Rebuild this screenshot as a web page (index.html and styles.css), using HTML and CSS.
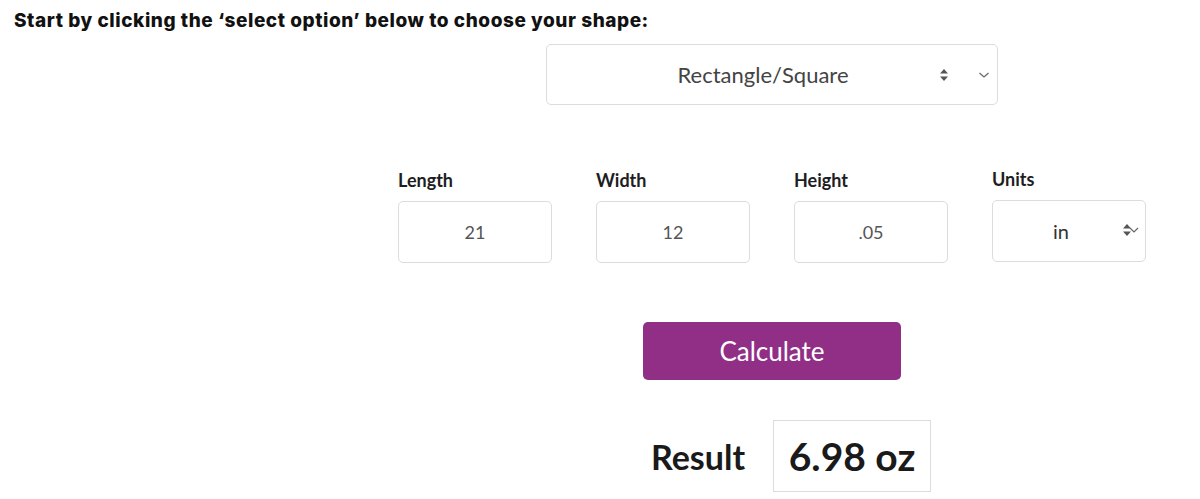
FILE: index.html
```html
<!DOCTYPE html>
<html lang="en">
<head>
<meta charset="utf-8">
<title>Shape calculator</title>
<link rel="stylesheet" href="styles.css">
</head>
<body>
<h1 class="intro">Start by clicking the ‘select option’ below to choose your shape:</h1>
<main class="calc">
  <div class="shape-select">
    <span class="shape-value">Rectangle/Square</span>
    <svg class="updown" width="10" height="14" viewBox="0 0 10 14"><path d="M5 1 L9 5.5 H1 Z M5 13 L9 8.5 H1 Z" fill="#555"/></svg>
    <svg class="chev" width="12" height="8" viewBox="0 0 12 8"><path d="M1.5 2 L6 6 L10.5 2" fill="none" stroke="#666" stroke-width="1.2"/></svg>
  </div>
  <div class="fields">
    <div class="field">
      <label class="label">Length</label>
      <div class="box">21</div>
    </div>
    <div class="field">
      <label class="label">Width</label>
      <div class="box">12</div>
    </div>
    <div class="field">
      <label class="label">Height</label>
      <div class="box">.05</div>
    </div>
    <div class="field field-units">
      <label class="label">Units</label>
      <div class="box box-units">
        <span class="units-value">in</span>
        <span class="units-arrows">
          <svg width="10" height="14" viewBox="0 0 10 14"><path d="M5 1 L9 5.5 H1 Z M5 13 L9 8.5 H1 Z" fill="#555"/></svg>
          <svg class="units-chev" width="10" height="8" viewBox="0 0 10 8"><path d="M1 2 L5 6 L9 2" fill="none" stroke="#666" stroke-width="1.2"/></svg>
        </span>
      </div>
    </div>
  </div>
  <button class="calc-btn">Calculate</button>
  <div class="result">
    <span class="result-label">Result</span>
    <span class="result-box">6.98 oz</span>
  </div>
</main>
</body>
</html>
```

FILE: styles.css
```css
html, body {
  margin: 0;
  padding: 0;
  background: #fff;
}
body {
  font-family: Lato, "Liberation Sans", sans-serif;
  color: #222;
}
.intro {
  margin: 0;
  padding: 10px 0 0 14px;
  font-family: Inter, "Liberation Sans", sans-serif;
  font-weight: 800;
  font-size: 19px;
  line-height: 22px;
  color: #111;
  letter-spacing: 0.55px;
}
.calc {
  margin-left: 344px;
  width: 856px;
  display: flex;
  flex-direction: column;
  align-items: center;
}
.shape-select {
  margin-top: 12px;
  width: 450px;
  height: 59px;
  border: 1px solid #dcdcdc;
  border-radius: 5px;
  display: flex;
  align-items: center;
  position: relative;
  box-sizing: content-box;
}
.shape-value {
  flex: 1;
  text-align: center;
  font-size: 22px;
  color: #444;
  padding-left: 40px;
}
.updown {
  margin-right: 29px;
}
.chev {
  margin-right: 7px;
}
.fields {
  margin-top: 64px;
  display: flex;
  gap: 44px;
}
.field {
  width: 154px;
  display: flex;
  flex-direction: column;
}
.label {
  font-weight: 700;
  font-size: 18px;
  line-height: 22px;
  color: #1e1e1e;
  margin-bottom: 10px;
}
.field-units .label {
  margin-top: -1px;
  margin-bottom: 10px;
}
.box {
  height: 60px;
  border: 1px solid #dcdcdc;
  border-radius: 5px;
  display: flex;
  align-items: center;
  justify-content: center;
  font-size: 18px;
  color: #555;
}
.box-units {
  position: relative;
  color: #333;
  font-size: 20px;
  padding-right: 16px;
}
.units-arrows {
  position: absolute;
  right: 6px;
  top: 22px;
  display: flex;
  align-items: center;
}
.units-chev {
  margin-left: -3px;
}
.calc-btn {
  margin-top: 59px;
  width: 258px;
  height: 58px;
  border: none;
  border-radius: 5px;
  background: #912f86;
  color: #fff;
  font-family: Lato, "Liberation Sans", sans-serif;
  font-size: 26px;
  padding: 0;
}
.result {
  margin-top: 40px;
  display: flex;
  align-items: center;
  gap: 28px;
  padding-left: 38px;
}
.result-label {
  font-weight: 700;
  font-size: 34px;
  color: #1a1a1a;
}
.result-box {
  width: 156px;
  height: 70px;
  border: 1px solid #dcdcdc;
  display: flex;
  align-items: center;
  justify-content: center;
  font-weight: 700;
  font-size: 39px;
  color: #1a1a1a;
}
```
